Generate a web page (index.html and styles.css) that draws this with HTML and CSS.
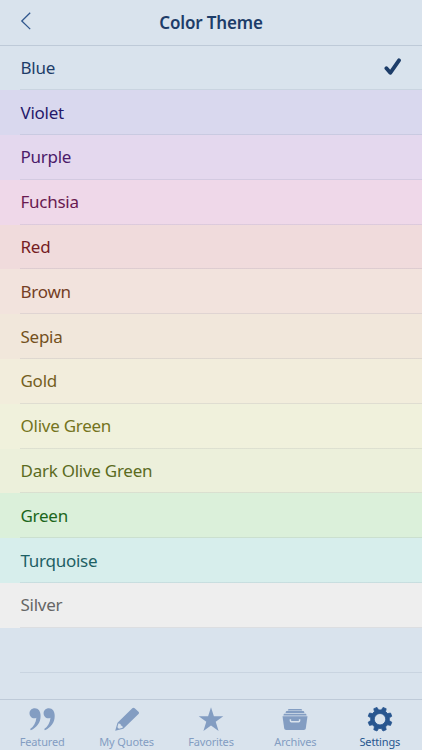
FILE: index.html
```html
<!DOCTYPE html>
<html lang="en">
<head>
    <meta charset="UTF-8">
    <meta name="viewport" content="width=device-width, initial-scale=1.0">
    <title>Color Theme</title>
    <link rel="stylesheet" href="styles.css">
</head>
<body>
    <header class="navbar">
        <button type="button" class="back-button" aria-label="Back">
            <svg width="12" height="18" viewBox="0 0 12 18"><path d="M10.200 .8 1.800 9l8.400 8.100"/></svg>
        </button>
        <h1>Color Theme</h1>
    </header>

    <ul class="theme-list">
        <li class="blue">
            <span>Blue</span>
            <svg class="check" width="18" height="18" viewBox="0 0 18 18" aria-label="Selected"><path d="M2.400 10.200 6.300 14.800 15 2.300"/></svg>
        </li>
        <li class="violet"><span>Violet</span></li>
        <li class="purple"><span>Purple</span></li>
        <li class="fuchsia"><span>Fuchsia</span></li>
        <li class="red"><span>Red</span></li>
        <li class="brown"><span>Brown</span></li>
        <li class="sepia"><span>Sepia</span></li>
        <li class="gold"><span>Gold</span></li>
        <li class="olive"><span>Olive Green</span></li>
        <li class="dark-olive"><span>Dark Olive Green</span></li>
        <li class="green"><span>Green</span></li>
        <li class="turquoise"><span>Turquoise</span></li>
        <li class="silver"><span>Silver</span></li>
        <li class="empty"></li>
    </ul>

    <nav class="tabbar">
        <a class="tab">
            <svg width="28" height="26" viewBox="0 0 28 26">
                <path d="M6.800 1.200C3.700 1.200 1.500 3.400 1.500 6.300s2.100 5 4.700 5c.9 0 1.600-.2 2.200-.6-.5 5-2.600 8.800-6.300 11.400l.7 1.100C8.800 20.500 12.600 15.500 12.600 8.900 12.600 4.100 10.400 1.200 6.800 1.200Z"/>
                <path d="M20.900 1.200c-3.100 0-5.300 2.200-5.300 5.100s2.100 5 4.700 5c.9 0 1.600-.2 2.200-.6-.5 5-2.600 8.800-6.300 11.400l.7 1.100c6-2.700 9.800-7.700 9.800-14.300 0-4.800-2.200-7.700-5.800-7.700Z"/>
            </svg>
            <span>Featured</span>
        </a>
        <a class="tab">
            <svg width="28" height="26" viewBox="0 0 28 26">
                <path d="M19.300 1.200c.7-.7 1.700-.7 2.400 0l3.800 3.600c.7.7.7 1.600 0 2.300L10.300 21.800 2.200 23.800 4.500 15.700Z"/>
                <path class="pencil-tip" d="M5.400 16.500c1.600-.2 2.400.5 2.500 1.900 1.400.1 2 .9 1.800 2.400l-3.800 1-1.500-1.500Z"/>
            </svg>
            <span>My Quotes</span>
        </a>
        <a class="tab">
            <svg width="28" height="26" viewBox="0 0 28 26"><path d="m14 .3 2.900 9h9.400l-7.600 5.500 2.900 9.200-7.600-5.600L6.400 24l2.900-9.200L1.700 9.300h9.400Z"/></svg>
            <span>Favorites</span>
        </a>
        <a class="tab">
            <svg width="28" height="26" viewBox="0 0 28 26">
                <path d="M8.200 2h11.600c.8 0 1.300.5 1.400 1.500H6.800C6.900 2.500 7.400 2 8.200 2ZM6 4.100h16c.9 0 1.300.6 1.400 1.900H4.600C4.700 4.700 5.100 4.100 6 4.100ZM3.700 6.700h20.600c.8 0 1.200.5 1.300 1.800H2.400c.1-1.300.5-1.800 1.300-1.800Z"/>
                <path d="M1.500 9.300h25l-1.700 12c-.2 1.200-.8 1.700-2 1.700H5.200c-1.200 0-1.800-.5-2-1.700Z"/>
                <path class="handle" d="M9.400 12.200v1.600c0 .6.300.9.900.9h7.400c.6 0 .9-.3.900-.9v-1.600"/>
            </svg>
            <span>Archives</span>
        </a>
        <a class="tab active">
            <svg width="28" height="26" viewBox="-14 -12.2 28 26">
                <path class="gear" d="M9.300 1.400 11.800 3 10.500 6.200 7.600 5.600 5.600 7.600 6.200 10.500 3 11.800 1.400 9.300H-1.400L-3 11.800-6.200 10.500-5.600 7.600-7.600 5.600-10.500 6.200-11.800 3-9.300 1.400V-1.400L-11.800-3-10.500-6.200-7.600-5.600-5.600-7.600-6.200-10.500-3-11.800-1.400-9.300H1.400L3-11.800 6.200-10.500 5.600-7.600 7.600-5.600 10.500-6.200 11.800-3 9.300-1.400ZM0-5.700a5.700 5.700 0 1 0 0 11.400 5.700 5.700 0 0 0 0-11.400Z"/>
            </svg>
            <span>Settings</span>
        </a>
    </nav>
</body>
</html>
```
FILE: styles.css
```css
:root {
    --background-color: #d9e3ed;
    --primary-color: #1d3d69;
    --tab-color: #839dc2;
    --tab-active-color: #28568f;
    --line-color: #becad8;
}
* {
    box-sizing: border-box;
}
body {
    margin: 0;
    height: 750px;
    display: flex;
    flex-direction: column;
    overflow: hidden;
    font-family: 'Trebuchet MS', 'Noto Sans', sans-serif;
    background-color: var(--background-color);
    color: var(--primary-color);
}
.navbar {
    flex: none;
    height: 45.5px;
    display: grid;
    grid-template-columns: 60px 1fr 60px;
    align-items: center;
    border-bottom: 1px solid var(--line-color);
}
.navbar h1 {
    margin: 0;
    text-align: center;
    font-size: 17px;
    font-weight: 600;
    letter-spacing: -0.15px;
}
.back-button {
    display: flex;
    padding: 0 0 2px 20px;
    border: none;
    background: none;
}
.back-button svg {
    fill: none;
    stroke: #31588e;
    stroke-width: 1.3;
}
.theme-list {
    flex: 1;
    margin: 0;
    padding: 0;
    list-style: none;
}
.theme-list li {
    display: flex;
    align-items: center;
    justify-content: space-between;
    height: 44.8px;
    padding: 0 20px 1px 20.5px;
    font-size: 17px;
    letter-spacing: -0.26px;
    /* separator line, inset on the left */
    background-image: linear-gradient(rgba(60, 80, 110, 0.1), rgba(60, 80, 110, 0.1));
    background-repeat: no-repeat;
    background-position: 20px 100%;
    background-size: 100% 1px;
}
.check {
    fill: none;
    stroke: var(--primary-color);
    stroke-width: 3.8;
    stroke-linecap: round;
    stroke-linejoin: round;
}
.blue { background-color: #d9e3ed; color: #1d3d69; }
.violet { background-color: #d9d8ee; color: #25186a; }
.purple { background-color: #e4d8ee; color: #4b1a69; }
.fuchsia { background-color: #efd8e9; color: #691a50; }
.red { background-color: #f0dbdc; color: #751c23; }
.brown { background-color: #f2e3dd; color: #753e24; }
.sepia { background-color: #f1e7db; color: #745020; }
.gold { background-color: #f2eddc; color: #75601e; }
.olive { background-color: #f0f1dc; color: #747420; }
.dark-olive { background-color: #ecf0db; color: #5b6b1e; }
.green { background-color: #dbf0da; color: #1c661b; }
.turquoise { background-color: #d7eeec; color: #1e6064; }
.silver { background-color: #eeeeee; color: #666666; }
.tabbar {
    flex: none;
    height: 51px;
    display: grid;
    grid-template-columns: repeat(5, 1fr);
    border-top: 1px solid var(--line-color);
}
.tab {
    display: flex;
    flex-direction: column;
    align-items: center;
    padding-top: 7px;
    font-size: 11px;
    line-height: 14px;
    letter-spacing: -0.15px;
    color: var(--tab-color);
}
.tab svg {
    fill: currentColor;
    margin-bottom: 2px;
}
.tab .handle {
    fill: none;
    stroke: var(--background-color);
    stroke-width: 1.5;
}
.tab .pencil-tip {
    fill: var(--background-color);
}
.tab .gear {
    fill-rule: evenodd;
    stroke: currentColor;
    stroke-width: 0.8;
    stroke-linejoin: round;
}
.tab.active {
    color: var(--tab-active-color);
}
```
